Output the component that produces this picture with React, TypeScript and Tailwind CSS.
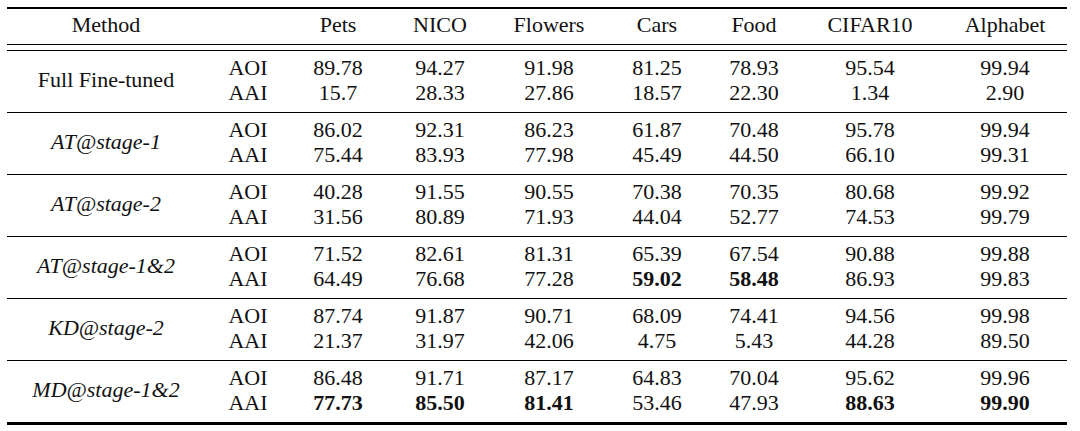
const columns = ["Pets", "NICO", "Flowers", "Cars", "Food", "CIFAR10", "Alphabet"];

// widths of each column, in px: method, metric, then the datasets
const widths = ["w-[198px]", "w-[86px]", "w-[94px]", "w-[110px]", "w-[108px]", "w-[108px]", "w-[86px]", "w-[146px]", "w-[124px]"];

type Cell = string | { v: string; bold: true };

interface Group {
  method: string;
  italic: boolean;
  aoi: Cell[];
  aai: Cell[];
}

const b = (v: string): Cell => ({ v, bold: true });

const groups: Group[] = [
  {
    method: "Full Fine-tuned",
    italic: false,
    aoi: ["89.78", "94.27", "91.98", "81.25", "78.93", "95.54", "99.94"],
    aai: ["15.7", "28.33", "27.86", "18.57", "22.30", "1.34", "2.90"],
  },
  {
    method: "AT@stage-1",
    italic: true,
    aoi: ["86.02", "92.31", "86.23", "61.87", "70.48", "95.78", "99.94"],
    aai: ["75.44", "83.93", "77.98", "45.49", "44.50", "66.10", "99.31"],
  },
  {
    method: "AT@stage-2",
    italic: true,
    aoi: ["40.28", "91.55", "90.55", "70.38", "70.35", "80.68", "99.92"],
    aai: ["31.56", "80.89", "71.93", "44.04", "52.77", "74.53", "99.79"],
  },
  {
    method: "AT@stage-1&2",
    italic: true,
    aoi: ["71.52", "82.61", "81.31", "65.39", "67.54", "90.88", "99.88"],
    aai: ["64.49", "76.68", "77.28", b("59.02"), b("58.48"), "86.93", "99.83"],
  },
  {
    method: "KD@stage-2",
    italic: true,
    aoi: ["87.74", "91.87", "90.71", "68.09", "74.41", "94.56", "99.98"],
    aai: ["21.37", "31.97", "42.06", "4.75", "5.43", "44.28", "89.50"],
  },
  {
    method: "MD@stage-1&2",
    italic: true,
    aoi: ["86.48", "91.71", "87.17", "64.83", "70.04", "95.62", "99.96"],
    aai: [b("77.73"), b("85.50"), b("81.41"), "53.46", "47.93", b("88.63"), b("99.90")],
  },
];

function ValueLine({ label, cells }: { label: string; cells: Cell[] }) {
  return (
    <div className="flex h-[25px] items-center">
      <div className={`${widths[1]} text-center`}>{label}</div>
      {cells.map((c, i) => (
        <div key={i} className={`${widths[i + 2]} text-center`}>
          {typeof c === "string" ? c : <span className="font-bold">{c.v}</span>}
        </div>
      ))}
    </div>
  );
}

export default function App() {
  return (
    <div className="min-h-[431px] bg-white px-[7px] pt-[7px] text-[22px] leading-none text-[#111]" style={{ fontFamily: '"Liberation Serif", "Times New Roman", serif' }}>
      <div className="w-[1060px] border-t-2 border-black">
        {/* Header */}
        <div className="flex h-[35px] items-center pb-[4px]">
          <div className={`${widths[0]} text-center`}>Method</div>
          <div className={widths[1]} />
          {columns.map((c, i) => (
            <div key={c} className={`${widths[i + 2]} text-center`}>
              {c}
            </div>
          ))}
        </div>

        {/* double rule */}
        <div className="h-[7px] border-y border-black" />

        {groups.map((g, gi) => (
          <div
            key={g.method}
            className={`flex pt-[4px] pb-[7px] ${gi === groups.length - 1 ? "border-b-[3px]" : "border-b"} border-black`}
          >
            <div className={`${widths[0]} flex items-center justify-center ${g.italic ? "italic" : ""}`}>
              {g.method}
            </div>
            <div className="flex flex-col">
              <ValueLine label="AOI" cells={g.aoi} />
              <ValueLine label="AAI" cells={g.aai} />
            </div>
          </div>
        ))}
      </div>
    </div>
  );
}
